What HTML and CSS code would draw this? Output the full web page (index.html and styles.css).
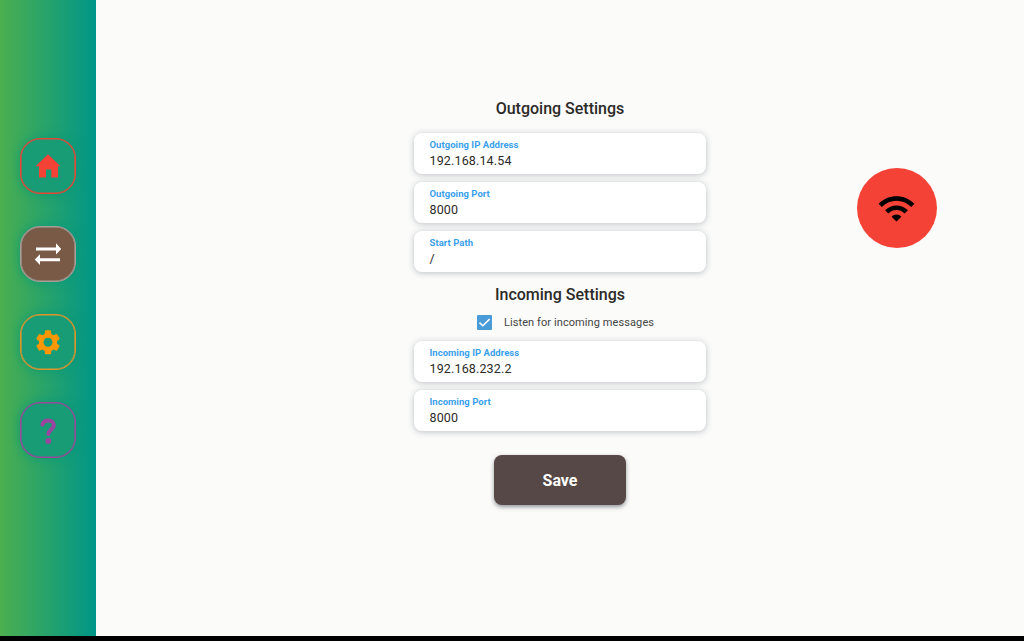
FILE: index.html
```html
<!DOCTYPE html>
<html lang="en">
<head>
<meta charset="utf-8">
<title>Connection Settings</title>
<link rel="stylesheet" href="styles.css">
</head>
<body>
<div class="app">
  <nav class="sidebar">
    <a class="nav-button home"><svg viewBox="0 0 54 54"><path d="M27 15.2 39.5 27.3H37V38.4H30.3V30.5H25V38.4H18V27.3H14.5Z"/></svg></a>
    <a class="nav-button transfer"><svg viewBox="0 0 54 54"><path d="M15 20.6H35V16.3L40.2 21.9 35 27.5V23.5H15ZM39 34.2H19V38L13.8 32.6 19 27.3V31.3H39Z"/></svg></a>
    <a class="nav-button settings"><svg viewBox="0 0 54 54"><path transform="translate(12 12.3) scale(1.25)" d="M19.14 12.94c.04-.3.06-.61.06-.94 0-.32-.02-.64-.07-.94l2.03-1.58c.18-.14.23-.41.12-.61l-1.92-3.32c-.12-.22-.37-.29-.59-.22l-2.39.96c-.5-.38-1.03-.7-1.62-.94L14.4 2.81c-.04-.24-.24-.41-.48-.41h-3.84c-.24 0-.43.17-.47.41l-.36 2.54c-.59.24-1.13.57-1.62.94l-2.39-.96c-.22-.08-.47 0-.59.22L2.74 8.87c-.12.21-.08.47.12.61l2.03 1.58c-.05.3-.09.63-.09.94s.02.64.07.94l-2.03 1.58c-.18.14-.23.41-.12.61l1.92 3.32c.12.22.37.29.59.22l2.39-.96c.5.38 1.03.7 1.62.94l.36 2.54c.05.24.24.41.48.41h3.84c.24 0 .44-.17.47-.41l.36-2.54c.59-.24 1.13-.56 1.62-.94l2.39.96c.22.08.47 0 .59-.22l1.92-3.32c.12-.22.07-.47-.12-.61l-2.01-1.58zM12 15.6c-1.98 0-3.6-1.62-3.6-3.6s1.62-3.6 3.6-3.6 3.6 1.62 3.6 3.6-1.62 3.6-3.6 3.6z"/></svg></a>
    <a class="nav-button help"><svg viewBox="0 0 54 54"><path class="hook" d="M21.4 21.6C22.1 18.6 24.4 17.4 27.2 17.4 30.6 17.4 32.9 19.3 32.9 22.1 32.9 26.4 27.3 26.8 27.3 31"/><circle cx="27.3" cy="37.9" r="2.9"/></svg></a>
  </nav>
  <main class="content">
    <form class="form">
      <h2 class="heading">Outgoing Settings</h2>
      <label class="field"><span class="label">Outgoing IP Address</span><span class="value">192.168.14.54</span></label>
      <label class="field"><span class="label">Outgoing Port</span><span class="value">8000</span></label>
      <label class="field"><span class="label">Start Path</span><span class="value">/</span></label>
      <h2 class="heading incoming">Incoming Settings</h2>
      <div class="listen"><span class="checkbox"><svg viewBox="0 0 15 15"><path d="M2.5 7.6 5.8 10.8 12.6 4.1"/></svg></span><span>Listen for incoming messages</span></div>
      <label class="field"><span class="label">Incoming IP Address</span><span class="value">192.168.232.2</span></label>
      <label class="field"><span class="label">Incoming Port</span><span class="value">8000</span></label>
      <button class="save" type="button">Save</button>
    </form>
    <div class="status"><svg viewBox="0 0 24 24"><path d="M1 9l2 2c4.97-4.97 13.03-4.97 18 0l2-2C16.93 2.93 7.08 2.93 1 9zm8 8l3 3 3-3c-1.65-1.66-4.34-1.66-6 0zm-4-4l2 2c2.76-2.76 7.24-2.76 10 0l2-2C15.14 9.14 8.87 9.14 5 13z"/></svg></div>
  </main>
</div>
</body>
</html>
```
FILE: styles.css
```css
* { box-sizing: border-box; }
body {
  margin: 0;
  background: #000;
  font-family: Roboto, "Liberation Sans", sans-serif;
}
.app { display: flex; height: 636px; background: #fbfbfa; }
.sidebar {
  display: flex;
  flex-direction: column;
  align-items: center;
  gap: 32px;
  width: 96px;
  padding-top: 138.4px;
  background: linear-gradient(90deg, #4caf50, #009688);
}
.nav-button {
  --ring: currentColor;
  width: 56px;
  height: 56px;
  border: 1px solid var(--ring);
  border-radius: 20px;
  background: #179c76;
  box-shadow: inset 0 0 0 .6px var(--ring), 0 0 10px 1px rgba(0, 150, 120, .65);
}
.nav-button svg { display: block; width: 54px; height: 54px; fill: currentColor; }
.home { --ring: #ea4637; color: #f44336; }
.transfer { --ring: #aaa09a; color: #fff; background: #795a47; }
.settings { --ring: #e2952b; color: #ff9800; }
.help { --ring: #9a489c; color: #9c45a0; }
.help .hook { fill: none; stroke: currentColor; stroke-width: 4; stroke-linecap: round; }
.content {
  flex: 1;
  display: grid;
  grid-template-columns: 1fr 292px 1fr;
}
.form {
  grid-column: 2;
  display: flex;
  flex-direction: column;
  align-items: center;
  padding-top: 97px;
}
.heading {
  margin: 0 0 12px;
  font-size: 16px;
  line-height: 24px;
  font-weight: 500;
  color: #2b2a27;
}
.field {
  display: flex;
  flex-direction: column;
  width: 292px;
  height: 41px;
  margin-bottom: 8px;
  padding: 5px 15.5px;
  border-radius: 8px;
  background: #fff;
  box-shadow: 0 1px 6px rgba(70, 80, 95, .34);
}
.label { font-size: 9.5px; line-height: 14px; font-weight: 700; letter-spacing: .04px; color: #3a9feb; }
.value { font-size: 12.5px; line-height: 17px; color: #2b2a27; letter-spacing: .15px; }
.incoming { margin: 3px 0 8px; }
.listen {
  display: flex;
  align-items: center;
  gap: 12px;
  height: 15px;
  margin: 0 0 11px 11px;
  font-size: 11px;
  letter-spacing: .09px;
  color: #444;
}
.checkbox { width: 15px; height: 15px; border-radius: 1px; background: #4a9cd8; }
.checkbox svg { display: block; fill: none; stroke: #fff; stroke-width: 1.5; }
.save {
  width: 132px;
  height: 50px;
  margin-top: 16px;
  border: 0;
  border-radius: 8px;
  background: #564846;
  box-shadow: 0 2px 4px rgba(40, 50, 60, .5);
  color: #fff;
  font: 700 16px Roboto, "Liberation Sans", sans-serif;
}
.status {
  display: grid;
  place-items: center;
  width: 80px;
  height: 80px;
  margin: 168px 0 0 150.6px;
  border-radius: 50%;
  background: #f44336;
}
.status svg { width: 39px; height: 39px; }
```
